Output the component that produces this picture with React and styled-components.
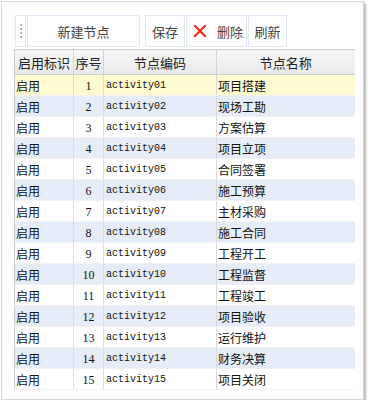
import React from "react";
import styled, { createGlobalStyle } from "styled-components";

const Global = createGlobalStyle`
  html, body { margin: 0; padding: 0; background: #ffffff; }
  body { font-family: "Noto Sans CJK SC", "Liberation Sans", sans-serif; }
`;

const Panel = styled.div`
  box-sizing: border-box;
  margin: 1px 0 0 1px;
  width: 363px;
  height: 399px;
  border: 1px solid #d6d6d6;
  box-shadow: 2px 2px 2px rgba(0, 0, 0, 0.28);
  padding: 13px 0 0 12px;
  display: flex;
  flex-direction: column;
  gap: 2px;
`;

const Toolbar = styled.div`
  display: flex;
  height: 32px;
  align-items: stretch;
  padding-left: 1px;
`;

const Grip = styled.div`
  box-sizing: border-box;
  width: 11px;
  border: 1px solid #dfe8f4;
  display: flex;
  flex-direction: column;
  align-items: center;
  justify-content: center;
  gap: 2px;
  margin-right: 1px;
  & > span {
    width: 2px;
    height: 2px;
    background: #a9b4c2;
  }
`;

const Button = styled.button`
  box-sizing: border-box;
  width: ${(p) => p.$w}px;
  margin-left: ${(p) => p.$ml || 0}px;
  border: 1px solid #dfe8f4;
  background: #ffffff;
  color: #444;
  font-family: "Noto Sans CJK SC", sans-serif;
  font-size: 13px;
  padding: 0;
  display: flex;
  align-items: center;
  justify-content: ${(p) => (p.$icon ? "flex-start" : "center")};
  padding-left: ${(p) => (p.$icon ? 6 : 0)}px;
  gap: 10px;
  cursor: default;
`;

const Table = styled.table`
  border-collapse: collapse;
  table-layout: fixed;
  width: 340px;
  font-size: 12px;
  color: #111;
`;

const HeadCell = styled.th`
  height: 24px;
  padding: 0;
  font-weight: normal;
  font-size: 13px;
  color: #222;
  text-align: center;
  background: linear-gradient(#f7f7f7, #e9e9e9);
  border-top: 1px solid #d0d0d0;
  border-bottom: 1px solid #cfcfcf;
  border-left: 1px solid #d4d4d4;
  &:first-child { border-left: 1px solid #c8c8c8; }
`;

const Row = styled.tr`
  background: ${(p) => (p.$selected ? "#fffbd0" : p.$alt ? "#e6edf8" : "#ffffff")};
`;

const Cell = styled.td`
  height: 20px;
  padding: 0 0 0 ${(p) => p.$pl ?? 2}px;
  border-left: 1px solid #dcdcdc;
  border-bottom: 1px solid #f1f1f1;
  text-align: ${(p) => p.$align || "left"};
  white-space: nowrap;
  overflow: hidden;
  font-family: ${(p) =>
    p.$mono ? '"Liberation Mono", monospace' : '"Noto Sans CJK SC", sans-serif'};
  font-size: ${(p) => (p.$mono ? "10px" : "12px")};
  &:first-child { border-left: 1px solid #c8c8c8; }
  &:last-child { border-left-color: #d8d8d8; }
`;

const Num = styled.span`
  font-family: "Liberation Serif", serif;
  font-size: 12px;
`;

const names = [
  "项目搭建", "现场工勘", "方案估算", "项目立项", "合同签署",
  "施工预算", "主材采购", "施工合同", "工程开工", "工程监督",
  "工程竣工", "项目验收", "运行维护", "财务决算", "项目关闭",
];

const DeleteIcon = () => (
  <svg width="14" height="14" viewBox="0 0 14 14">
    <path d="M2 2 L12 12 M12 2 L2 12" stroke="#e8321e" strokeWidth="2.2" strokeLinecap="square" />
  </svg>
);

export default function App() {
  return (
    <>
      <Global />
      <Panel>
        <Toolbar>
          <Grip>
            <span /><span /><span /><span />
          </Grip>
          <Button $w={113}>新建节点</Button>
          <Button $w={40} $ml={5}>保存</Button>
          <Button $w={61} $ml={1} $icon>
            <DeleteIcon />
            删除
          </Button>
          <Button $w={39} $ml={1}>刷新</Button>
        </Toolbar>
        <Table>
          <colgroup>
            <col style={{ width: 59 }} />
            <col style={{ width: 30 }} />
            <col style={{ width: 113 }} />
            <col style={{ width: 138 }} />
          </colgroup>
          <thead>
            <tr>
              <HeadCell>启用标识</HeadCell>
              <HeadCell>序号</HeadCell>
              <HeadCell>节点编码</HeadCell>
              <HeadCell>节点名称</HeadCell>
            </tr>
          </thead>
          <tbody>
            {names.map((n, i) => {
              const idx = i + 1;
              const code = "activity" + String(idx).padStart(2, "0");
              return (
                <Row key={idx} $selected={i === 0} $alt={i % 2 === 1}>
                  <Cell $pl={1}>启用</Cell>
                  <Cell $align="center" $pl={0}><Num>{idx}</Num></Cell>
                  <Cell $mono $pl={2}>{code}</Cell>
                  <Cell $pl={1}>{n}</Cell>
                </Row>
              );
            })}
          </tbody>
        </Table>
      </Panel>
    </>
  );
}
